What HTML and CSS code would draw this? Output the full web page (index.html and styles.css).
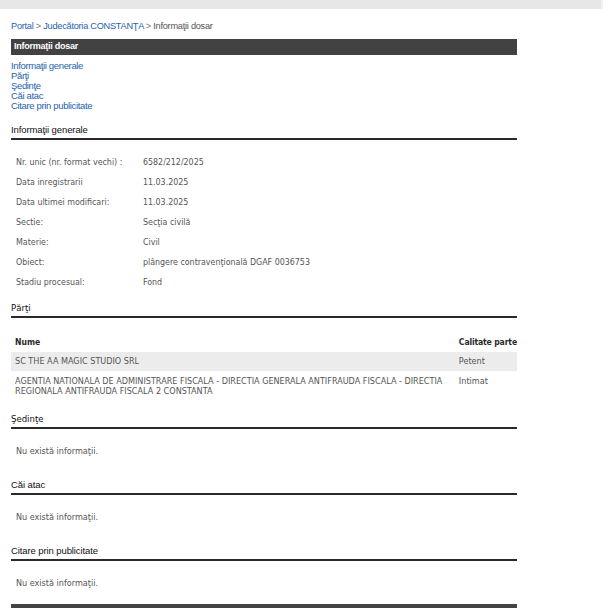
FILE: index.html
```html
<!DOCTYPE html>
<html lang="ro">
<head>
<meta charset="utf-8">
<title>Informaţii dosar</title>
<link rel="stylesheet" href="styles.css">
</head>
<body>
<div class="topband"></div>
<div class="page">
  <div class="crumbs"><a href="#">Portal</a> <span class="sep">&gt;</span> <a href="#">Judecătoria CONSTANŢA</a> <span class="sep">&gt;</span> <span class="cur">Informaţii dosar</span></div>
  <div class="titlebar">Informaţii dosar</div>
  <div class="toc">
    <a href="#">Informaţii generale</a>
    <a href="#">Părţi</a>
    <a href="#">Şedinţe</a>
    <a href="#">Căi atac</a>
    <a href="#">Citare prin publicitate</a>
  </div>

  <h2 class="sec sec-first">Informaţii generale</h2>
  <table class="info">
    <tr><td class="lbl">Nr. unic (nr. format vechi) :</td><td>6582/212/2025</td></tr>
    <tr><td class="lbl">Data inregistrarii</td><td>11.03.2025</td></tr>
    <tr><td class="lbl">Data ultimei modificari:</td><td>11.03.2025</td></tr>
    <tr><td class="lbl">Sectie:</td><td>Secţia civilă</td></tr>
    <tr><td class="lbl">Materie:</td><td>Civil</td></tr>
    <tr><td class="lbl">Obiect:</td><td>plângere contravenţională DGAF 0036753</td></tr>
    <tr><td class="lbl">Stadiu procesual:</td><td>Fond</td></tr>
  </table>

  <h2 class="sec sec-tahoma">Părţi</h2>
  <table class="parti">
    <tr class="head"><th>Nume</th><th class="col2">Calitate parte</th></tr>
    <tr class="alt"><td>SC THE AA MAGIC STUDIO SRL</td><td class="col2">Petent</td></tr>
    <tr class="long"><td>AGENTIA NATIONALA DE ADMINISTRARE FISCALA - DIRECTIA GENERALA ANTIFRAUDA FISCALA - DIRECTIA REGIONALA ANTIFRAUDA FISCALA 2 CONSTANTA</td><td class="col2">Intimat</td></tr>
  </table>

  <h2 class="sec sec-tahoma">Şedinţe</h2>
  <p class="empty">Nu există informaţii.</p>

  <h2 class="sec">Căi atac</h2>
  <p class="empty">Nu există informaţii.</p>

  <h2 class="sec">Citare prin publicitate</h2>
  <p class="empty">Nu există informaţii.</p>

  <div class="footbar"></div>
</div>
</body>
</html>
```

FILE: styles.css
```css
html, body {
  margin: 0;
  padding: 0;
  background: #ffffff;
}
body {
  font-family: "Liberation Sans", Arial, sans-serif;
  font-size: 9.5px;
  color: #222;
}
.topband {
  width: 601px;
  height: 9px;
  background: #e7e7e7;
  border-right: 2px solid #f2f2f2;
}
.page {
  width: 506px;
  margin-left: 11px;
}
.crumbs {
  margin-top: 11px;
  height: 12px;
  line-height: 12px;
  font-size: 9.2px;
  letter-spacing: -0.25px;
  color: #666;
}
.crumbs a {
  color: #1e63ae;
  text-decoration: none;
}
.crumbs .sep { color: #777; }
.crumbs .cur { color: #555; }
.titlebar {
  margin-top: 7px;
  height: 16px;
  line-height: 15px;
  background: #434242;
  color: #fff;
  font-weight: bold;
  font-size: 9px;
  letter-spacing: -0.25px;
  padding-left: 3px;
}
.toc {
  margin-top: 6px;
  display: flex;
  flex-direction: column;
  align-items: flex-start;
}
.toc a {
  font-size: 9.5px;
  letter-spacing: -0.35px;
  line-height: 10px;
  color: #1e63ae;
  text-decoration: none;
}
.sec {
  margin: 0;
  font-size: 9.5px;
  letter-spacing: -0.1px;
  font-weight: normal;
  color: #111;
  line-height: 12px;
  padding-bottom: 2px;
  border-bottom: 2px solid #2a2a2a;
}
.sec-first { margin-top: 13px; }
.sec-tahoma {
  font-family: "DejaVu Sans Condensed", "DejaVu Sans", sans-serif;
  font-size: 9.5px;
  letter-spacing: 0;
}
.info {
  margin-top: 12px;
  border-collapse: collapse;
  font-family: "DejaVu Sans Condensed", "DejaVu Sans", sans-serif;
  font-size: 8.8px;
  color: #555;
}
.info td {
  height: 20px;
  padding: 0;
  vertical-align: middle;
}
.info td.lbl {
  width: 127px;
  padding-left: 5px;
}
.info + .sec { margin-top: 10px; }
.parti {
  margin-top: 14px;
  width: 100%;
  border-collapse: collapse;
  font-family: "DejaVu Sans Condensed", "DejaVu Sans", sans-serif;
  font-size: 9px;
  color: #555;
}
.parti th {
  text-align: left;
  font-weight: bold;
  font-size: 8.6px;
  color: #2a2a2a;
  height: 20px;
  padding: 0 0 0 4px;
  vertical-align: middle;
}
.parti th.col2 { letter-spacing: -0.15px; }
.parti td {
  line-height: 10px;
  vertical-align: top;
}
.parti tr.alt td {
  background: #ececec;
  padding: 4px 0 5px 4px;
}
.parti tr.long td {
  padding: 5px 0 4px 4px;
}
.parti .col2 {
  width: 56px;
  white-space: nowrap;
}
.parti + .sec { margin-top: 13px; }
.empty {
  margin: 16px 0 0 0;
  padding-left: 5px;
  line-height: 12px;
  font-family: "DejaVu Sans Condensed", "DejaVu Sans", sans-serif;
  font-size: 9px;
  color: #555;
}
.empty + .sec { margin-top: 22px; }
.footbar {
  margin-top: 15px;
  height: 4px;
  background: #444;
}
```
